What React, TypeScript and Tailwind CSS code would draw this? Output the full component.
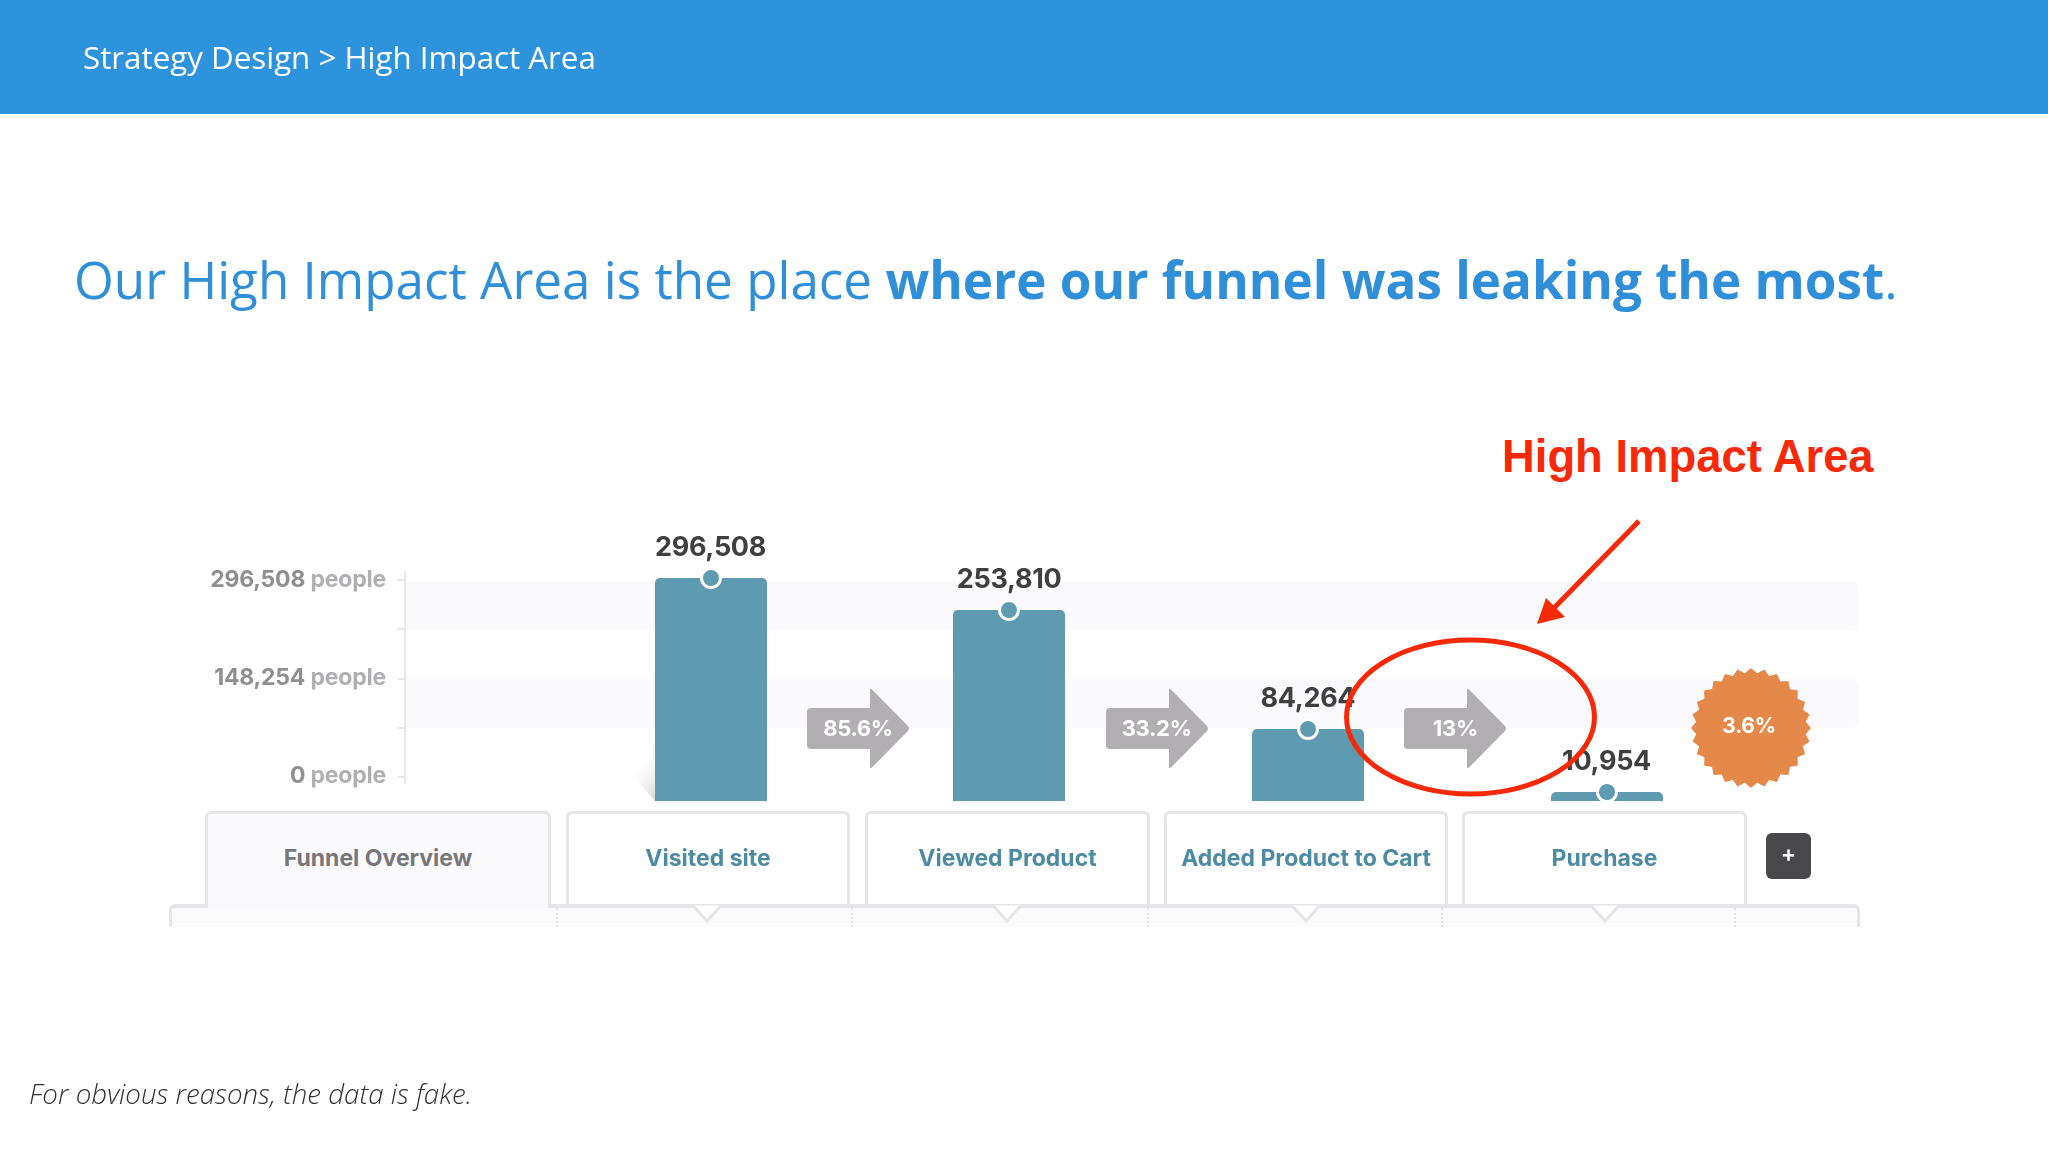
import React from "react";

const chartFont = "font-['Inter',sans-serif]";

const tickRows = [0, 1, 2, 3, 4];

const yLabels = [
  { value: "296,508", unit: "people" },
  { value: "148,254", unit: "people" },
  { value: "0", unit: "people" },
];

const badgePoints = (() => {
  const teeth = 28;
  const pts: string[] = [];
  for (let i = 0; i < teeth * 2; i++) {
    const r = i % 2 === 0 ? 60 : 55;
    const a = (Math.PI * i) / teeth;
    pts.push(`${(60 + r * Math.sin(a)).toFixed(1)},${(60 - r * Math.cos(a)).toFixed(1)}`);
  }
  return pts.join(" ");
})();

const Arrow: React.FC<{ label: string }> = ({ label }) => (
  <div className="relative w-[102px] h-[81px] mb-[32px] ml-[40.5px] mr-[44.2px] shrink-0">
    <svg viewBox="0 0 102 81" className="w-[102px] h-[81px]">
      <path
        d="M4 20H63V2Q63 0 65 1.500L101 38Q103 40.500 101 43L65 79.500Q63 81 63 79V61H4Q0 61 0 57V24Q0 20 4 20Z"
        fill="#b1afb2"
      />
    </svg>
    <span className="absolute left-[14px] top-[26px] w-[74px] text-center text-[22px] leading-[28px] tracking-[-0.3px] font-bold text-white">
      {label}
    </span>
  </div>
);

const Bar: React.FC<{ value: string; height: string; children?: React.ReactNode }> = ({
  value,
  height,
  children,
}) => (
  <div className="flex flex-col items-center w-[112px] shrink-0">
    <span className="mb-[16px] text-[27px] leading-[30px] tracking-[-0.3px] font-bold text-[#3f3f40] whitespace-nowrap">
      {value}
    </span>
    <div className={`relative w-[112px] ${height} bg-[#5f9bb0] rounded-t-[5px]`}>
      {children}
      <div className="absolute -top-[11px] left-1/2 -translate-x-1/2 w-[22px] h-[22px] rounded-full border-[3px] border-white bg-[#5f9bb0]" />
    </div>
  </div>
);

const Chevron: React.FC<{ offset: string }> = ({ offset }) => (
  <svg viewBox="0 0 30 20" className={`w-[30px] h-[20px] -mt-[4px] ${offset}`}>
    <path d="M1 1.500L15 17L29 1.500" fill="#ffffff" stroke="#e6e5e8" strokeWidth="3" />
  </svg>
);

const tabClass =
  "flex items-center justify-center h-[93px] border-[3px] border-b-0 border-[#e6e5e8] rounded-t-md text-[23px] font-bold shrink-0";

const App: React.FC = () => {
  return (
    <div className="relative flex flex-col w-[2048px] h-[1152px] bg-white overflow-hidden font-['Open_Sans',sans-serif]">
      <div className="flex items-center h-[114px] pl-[83px] bg-[#2e93dd] shrink-0">
        <span className="text-[31.3px] font-normal text-white blur-[0.3px]">Strategy Design &gt; High Impact Area</span>
      </div>

      <h1 className="mt-[129px] pl-[74px] text-[51.2px] leading-[72px] font-normal text-[#2f8fd8] whitespace-nowrap blur-[0.3px]">
        Our High Impact Area is the place <strong className="font-bold">where our funnel was leaking the most</strong>.
      </h1>

      <div className={`mt-[215px] ${chartFont} blur-[0.7px]`}>
        <div className="flex h-[271px]">
          <div className="flex flex-col items-end w-[386px] pt-[34px] gap-[68px] shrink-0">
            {yLabels.map((l) => (
              <div key={l.value} className="text-[23px] leading-[30px] tracking-[-0.2px] font-bold text-[#8f8e90] whitespace-nowrap">
                {l.value} <span className="text-[#b0afb1]">{l.unit}</span>
              </div>
            ))}
          </div>
          <div className="flex flex-col justify-between w-[20px] h-[213px] mt-[41px] pt-[8px] pb-[6px] pl-[11px] border-r-2 border-[#e8e7ea] shrink-0">
            {tickRows.map((t) => (
              <div key={t} className="h-[2px] bg-[#e8e7ea]" />
            ))}
          </div>
          <div className="relative flex items-end w-[1452px] pl-[248.5px]">
            <div className="absolute inset-0 flex flex-col pt-[51px] gap-[49px]">
              <div className="h-[49px] bg-[#faf9fb] rounded-r-md" />
              <div className="h-[49px] bg-[#faf9fb] rounded-r-md" />
            </div>
            <div className="relative flex items-end">
              <Bar value="296,508" height="h-[223px]">
                <svg viewBox="0 0 28 56" className="absolute right-full bottom-0 w-[28px] h-[56px]">
                  <defs>
                    <linearGradient id="barShadow" x1="1" y1="0.95" x2="0.45" y2="0.2">
                      <stop offset="0" stopColor="#d8d8da" />
                      <stop offset="1" stopColor="#ffffff" stopOpacity="0" />
                    </linearGradient>
                  </defs>
                  <path d="M28 0V56L0 24V0Z" fill="url(#barShadow)" />
                </svg>
              </Bar>
              <Arrow label="85.6%" />
              <Bar value="253,810" height="h-[191px]" />
              <Arrow label="33.2%" />
              <Bar value="84,264" height="h-[72px]" />
              <Arrow label="13%" />
              <Bar value="10,954" height="h-[9px]" />
              <div className="relative w-[120px] h-[120px] ml-[28px] mb-[13px] shrink-0">
                <svg viewBox="0 0 120 120" className="w-[120px] h-[120px]">
                  <polygon points={badgePoints} fill="#e5894b" />
                </svg>
                <span className="absolute inset-0 flex items-center justify-center pb-[4px] pr-[3px] text-[21px] tracking-[-0.2px] font-bold text-white">
                  3.6%
                </span>
              </div>
            </div>
          </div>
        </div>

        <div className="flex items-start mt-[10px] pl-[205px]">
          <div className={`${tabClass} relative z-10 w-[346px] h-[97px] pb-[5px] bg-[#faf9fb] text-[#77767a]`}>Funnel Overview</div>
          <div className={`${tabClass} w-[284px] ml-[15px] pb-[2px] text-[#4d8ba3]`}>Visited site</div>
          <div className={`${tabClass} w-[285px] ml-[15px] pb-[2px] text-[#4d8ba3]`}>Viewed Product</div>
          <div className={`${tabClass} w-[284px] ml-[14px] pb-[2px] text-[#4d8ba3]`}>Added Product to Cart</div>
          <div className={`${tabClass} w-[285px] ml-[14px] pb-[2px] text-[#4d8ba3]`}>Purchase</div>
          <div className="flex items-center justify-center w-[45px] h-[46px] mt-[22px] ml-[19px] pb-[4px] rounded-md bg-[#48484a] text-[23px] leading-none font-semibold text-white">
            +
          </div>
        </div>

        <div className="flex w-[1691px] h-[23px] -mt-[4px] ml-[169px] border-t-[4px] border-x-[3px] border-[#e6e5e8] rounded-t-md bg-[#fbfbfc]">
          <div className="w-[386px] border-r-2 border-dotted border-[#e6e5e8]" />
          <div className="flex w-[295px] border-r-2 border-dotted border-[#e6e5e8]">
            <Chevron offset="ml-[134px]" />
          </div>
          <div className="flex w-[296px] border-r-2 border-dotted border-[#e6e5e8]">
            <Chevron offset="ml-[139px]" />
          </div>
          <div className="flex w-[294px] border-r-2 border-dotted border-[#e6e5e8]">
            <Chevron offset="ml-[142px]" />
          </div>
          <div className="flex w-[293px] border-r-2 border-dotted border-[#e6e5e8]">
            <Chevron offset="ml-[147px]" />
          </div>
        </div>
      </div>

      <p className="mt-auto pb-[39px] pl-[29px] text-[27.7px] leading-[40px] font-light italic text-[#333333] blur-[0.2px]">
        For obvious reasons, the data is fake.
      </p>

      <span className="absolute left-[1502px] top-[429px] text-[45.4px] leading-[56px] font-bold text-[#f62a08] font-['Liberation_Sans',sans-serif] whitespace-nowrap">
        High Impact Area
      </span>
      <svg viewBox="0 0 310 300" className="absolute left-[1340px] top-[510px] w-[310px] h-[300px]">
        <ellipse cx="130.500" cy="207" rx="124" ry="77" fill="none" stroke="#f62a08" strokeWidth="5" />
        <line x1="299" y1="11" x2="214" y2="98" stroke="#f62a08" strokeWidth="5" />
        <polygon points="197,114 206,88 225,107" fill="#f62a08" />
      </svg>
    </div>
  );
};

export default App;
